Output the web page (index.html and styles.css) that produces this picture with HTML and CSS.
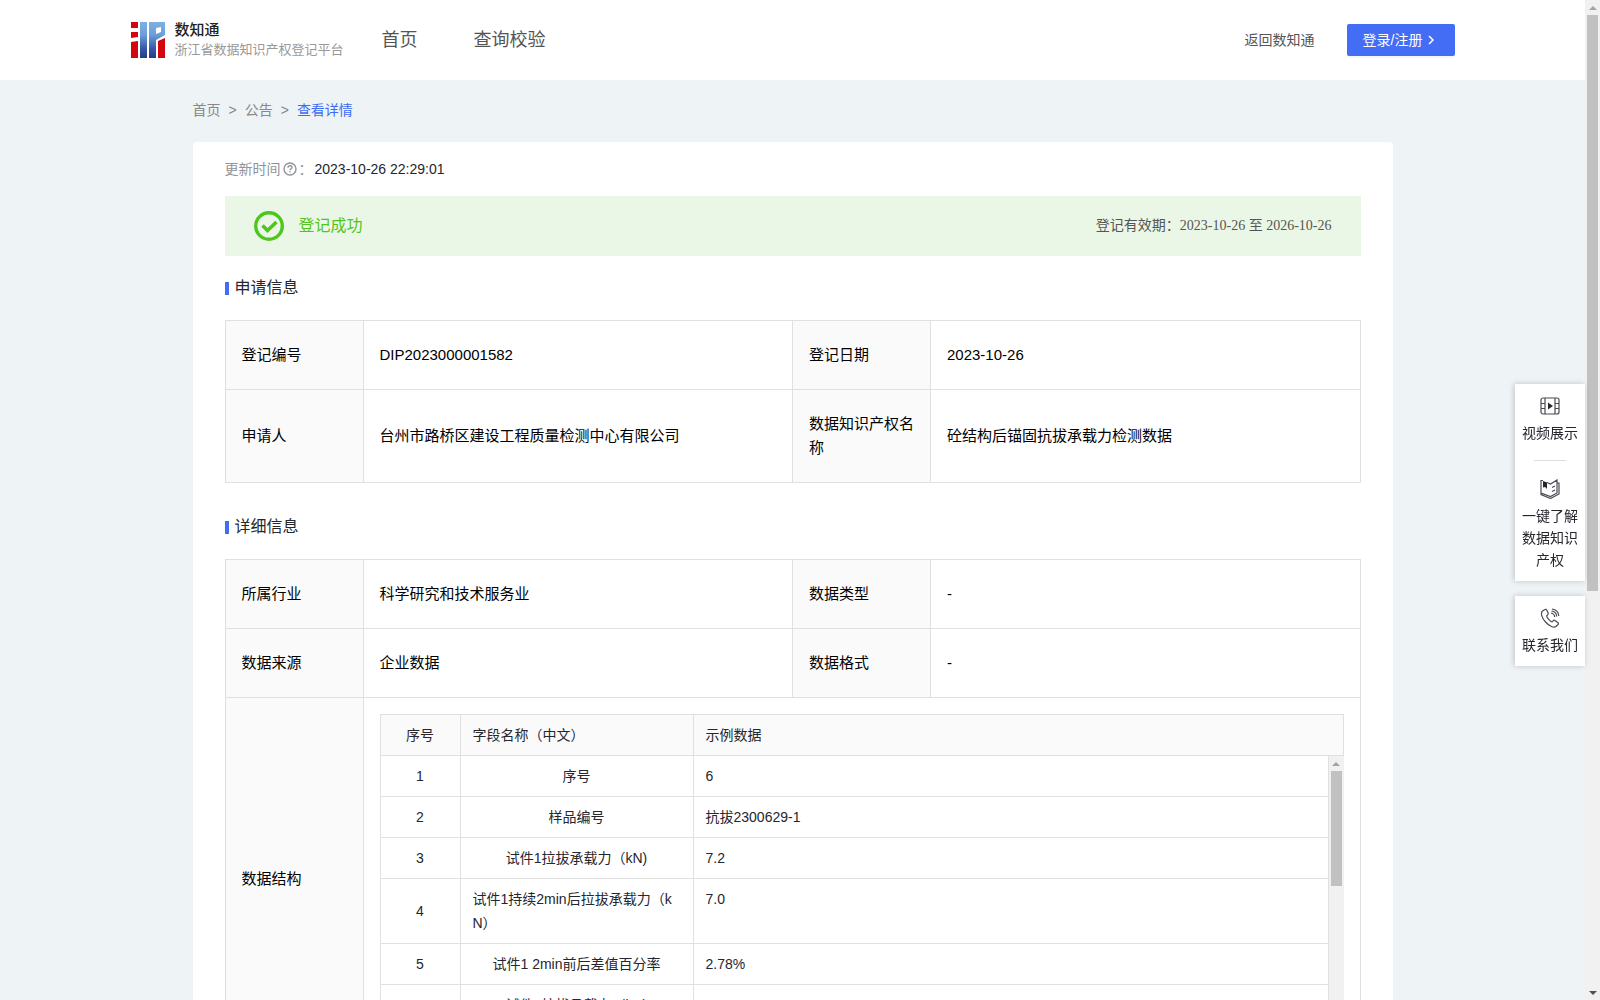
FILE: index.html
```html
<!DOCTYPE html>
<html lang="zh-CN">
<head>
    <meta charset="UTF-8">
    <meta name="viewport" content="width=device-width, initial-scale=1.0">
    <title>数知通</title>
    <link rel="stylesheet" href="styles.css">
</head>
<body>
<div class="page">
    <!-- Header -->
    <header class="header">
        <div class="header-inner">
            <a class="brand" href="/">
                <svg class="logo" width="34" height="36" viewBox="0 0 34 36">
                    <defs>
                        <linearGradient id="blue" gradientUnits="userSpaceOnUse" x1="0" y1="0" x2="0" y2="36">
                            <stop offset="0" stop-color="#7fb0e4"/>
                            <stop offset="0.35" stop-color="#6c9fdb"/>
                            <stop offset="0.75" stop-color="#3557a5"/>
                            <stop offset="1" stop-color="#263c86"/>
                        </linearGradient>
                    </defs>
                    <path fill="#d2060c" d="M0 0h7v6H0zM0 10h7v5l-7 1zM0 20l7-1v17H0z"/>
                    <path fill="url(#blue)" d="M9 0h7v36H9z"/>
                    <path fill="url(#blue)" fill-rule="evenodd" d="M18 0h16v13l-9 5v18h-7zM25 6v6l5-2V5z"/>
                    <path fill="#d2060c" d="M27 19l7-3v20h-7z"/>
                </svg>
                <span class="brand-text">
                    <strong>数知通</strong>
                    <small>浙江省数据知识产权登记平台</small>
                </span>
            </a>
            <nav class="nav">
                <a href="/">首页</a>
                <a href="/check">查询校验</a>
            </nav>
            <div class="header-right">
                <a href="/back">返回数知通</a>
                <button class="login-btn" type="button">登录/注册
                    <svg width="8" height="10" viewBox="0 0 8 10"><path d="M2 1l4 4-4 4" fill="none" stroke="#fff" stroke-width="1.5"/></svg>
                </button>
            </div>
        </div>
    </header>

    <main class="container">
        <div class="breadcrumb">
            <a href="/">首页</a><span>&gt;</span><a href="/notice">公告</a><span>&gt;</span><a class="active" href="#detail">查看详情</a>
        </div>

        <div class="card" id="detail">
            <div class="update">
                <span class="update-label">更新时间<svg width="18" height="16" viewBox="0 0 18 16" fill="none" stroke="#909399" stroke-width="1.4"><circle cx="9" cy="8" r="6"/><path d="M7 6.7c0-2.6 4-2.5 4-.3 0 1.400-2 1.300-2 2.900M9 10.300v1.300"/></svg>：</span>
                <span>2023-10-26 22:29:01</span>
            </div>

            <div class="banner">
                <svg width="30" height="30" viewBox="0 0 30 30" fill="none" stroke="#4fc61e"><circle cx="15" cy="15" r="13.300" stroke-width="3.400"/><path d="M8.500 14.500l5 5 9-8.500" stroke-width="3.600"/></svg>
                <span class="banner-status">登记成功</span>
                <span class="banner-date">登记有效期：2023-10-26 至 2026-10-26</span>
            </div>

            <h2>申请信息</h2>
            <table class="info">
                <tr>
                    <th>登记编号</th>
                    <td>DIP2023000001582</td>
                    <th>登记日期</th>
                    <td>2023-10-26</td>
                </tr>
                <tr>
                    <th>申请人</th>
                    <td>台州市路桥区建设工程质量检测中心有限公司</td>
                    <th>数据知识产权名称</th>
                    <td>砼结构后锚固抗拔承载力检测数据</td>
                </tr>
            </table>

            <h2>详细信息</h2>
            <table class="info">
                <tr>
                    <th>所属行业</th>
                    <td>科学研究和技术服务业</td>
                    <th>数据类型</th>
                    <td>-</td>
                </tr>
                <tr>
                    <th>数据来源</th>
                    <td>企业数据</td>
                    <th>数据格式</th>
                    <td>-</td>
                </tr>
                <tr>
                    <th>数据结构</th>
                    <td class="nested" colspan="3">
                        <table class="fields">
                            <tr>
                                <th class="col-no">序号</th>
                                <th class="col-name">字段名称（中文）</th>
                                <th>示例数据</th>
                            </tr>
                        </table>
                        <!-- Scrolling rows -->
                        <div class="fields-body">
                            <table class="fields">
                                <tr>
                                    <td class="col-no">1</td>
                                    <td class="col-name"><span>序号</span></td>
                                    <td>6</td>
                                </tr>
                                <tr>
                                    <td class="col-no">2</td>
                                    <td class="col-name"><span>样品编号</span></td>
                                    <td>抗拔2300629-1</td>
                                </tr>
                                <tr>
                                    <td class="col-no">3</td>
                                    <td class="col-name"><span>试件1拉拔承载力（kN)</span></td>
                                    <td>7.2</td>
                                </tr>
                                <tr>
                                    <td class="col-no">4</td>
                                    <td class="col-name"><span>试件1持续2min后拉拔承载力（kN）</span></td>
                                    <td>7.0</td>
                                </tr>
                                <tr>
                                    <td class="col-no">5</td>
                                    <td class="col-name"><span>试件1 2min前后差值百分率</span></td>
                                    <td>2.78%</td>
                                </tr>
                                <tr>
                                    <td class="col-no">6</td>
                                    <td class="col-name"><span>试件2拉拔承载力（kN)</span></td>
                                    <td>6.9</td>
                                </tr>
                            </table>
                            <div class="scrollbar">
                                <i class="arrow-up"></i>
                                <div class="thumb thumb-short"></div>
                            </div>
                        </div>
                    </td>
                </tr>
            </table>
        </div>
    </main>
</div>

<div class="scrollbar">
    <i class="arrow-up"></i>
    <div class="thumb thumb-page"></div>
    <i class="arrow-down"></i>
</div>

<!-- Side tools -->
<aside class="side">
    <div class="side-box">
        <a href="#video">
            <svg width="20" height="20" viewBox="0 0 20 20" fill="none" stroke="#4a4b52" stroke-width="1.200"><rect x="1" y="2" width="18" height="16" rx="2"/><path d="M5 2v16M15 2v16M1 7.500h4M1 12.500h4M15 7.500h4M15 12.500h4"/><path d="M8 6.500l5 3.500-5 3.500z" fill="#25262e" stroke="none"/></svg>
            <span>视频展示</span>
        </a>
        <hr>
        <a href="#guide">
            <svg width="20" height="20" viewBox="0 0 20 20" fill="none" stroke="#4a4b52" stroke-width="1.200"><path d="M7 3.500l3.500 1.500L17 1v13l-6.500 3.500L1 14V1.500h2M1 14v1.500L10.500 19.500 19 15V4h-1.500M12 8.500l3-1.500M12 12.500l3-1.500"/><path d="M3 2l4 1.500V10L5.200 8 3 8.500z" fill="#25262e" stroke="none"/></svg>
            <span>一键了解数据知识产权</span>
        </a>
    </div>
    <div class="side-box">
        <a href="#contact">
            <svg width="20" height="20" viewBox="0 0 20 20" fill="none" stroke="#4a4b52" stroke-width="1.200"><path d="M5 1.500L2.500 3C.5 5 1.500 9.500 5.500 14s8.500 6 10.500 4.500l2-2c.7-.8.500-1.500-.3-2L15 12.500c-.8-.5-1.500-.3-2 .3l-1 1c-1.500 0-5.500-4.500-5.300-6l1.100-1.200c.5-.5.500-1.100.2-1.800L6.700 2C6.300 1.200 5.700 1.100 5 1.500zM11 5c2 .3 3.500 2 3.700 4M11.500 3c3 .3 5 2.500 5.200 5.500M12 1c4 .5 6.500 3 6.800 7"/></svg>
            <span>联系我们</span>
        </a>
    </div>
</aside>
</body>
</html>
```
FILE: styles.css
```css
* {
  box-sizing: border-box;
}

body {
  margin: 0;
  display: flex;
  height: 100vh;
  overflow: hidden;
  background-color: #eef3f6;
  color: #25262e;
  font-family: "Liberation Sans", "Noto Sans CJK SC", sans-serif;
  font-size: 14px;
  line-height: 22px;
}

a {
  color: inherit;
  text-decoration: none;
}

svg {
  flex: none;
}

.page {
  flex: 1;
  overflow: hidden;
}

/* Header */
.header {
  background-color: #fff;
}

.header-inner {
  display: flex;
  align-items: center;
  max-width: 1324px;
  height: 80px;
  margin: 0 auto;
  color: #555;
}

.brand {
  display: flex;
  align-items: center;
  gap: 10px;
}

.brand-text strong {
  display: block;
  color: #222;
  font-size: 15px;
  font-weight: 500;
  line-height: 20px;
}

.brand-text small {
  display: block;
  color: #999;
  font-size: 13px;
  line-height: 20px;
}

.nav {
  display: flex;
  gap: 56px;
  margin-left: 38px;
  font-size: 18px;
}

.header-right {
  display: flex;
  align-items: center;
  gap: 32px;
  margin-left: auto;
}

.login-btn {
  display: flex;
  align-items: center;
  gap: 4px;
  height: 32px;
  padding: 0 20px 0 16px;
  border: none;
  border-radius: 2px;
  background-color: #446df6;
  box-shadow: 0 2px 0 rgba(0, 0, 0, 0.04);
  color: #fff;
  font: inherit;
  cursor: pointer;
}

.login-btn:hover {
  background-color: #6b8cff;
}

.container {
  max-width: 1200px;
  margin: 0 auto;
}

.breadcrumb {
  display: flex;
  gap: 8px;
  padding: 19px 0 21px;
  color: #888;
}

.breadcrumb .active {
  color: #3d6bf5;
}

.card {
  padding: 16px 32px 32px;
  border-radius: 4px;
  background-color: #fff;
}

.update {
  display: flex;
  gap: 2px;
  margin-bottom: 16px;
}

.update-label {
  display: flex;
  align-items: center;
  color: #909399;
}

/* Registration status */
.banner {
  display: flex;
  align-items: center;
  height: 60px;
  padding: 0 29px;
  background-color: #ebf7e6;
}

.banner-status {
  margin-left: 15px;
  color: #52c41a;
  font-size: 16px;
}

.banner-date {
  margin-left: auto;
  color: #555;
  font-family: "Liberation Serif", "Noto Sans CJK SC", serif;
}

h2 {
  display: flex;
  align-items: center;
  gap: 6px;
  margin: 21px 0;
  font-size: 16px;
  font-weight: 400;
  line-height: 22px;
}

h2::before {
  content: "";
  width: 4px;
  height: 13px;
  background-color: #446df6;
}

.info + h2 {
  margin-top: 33px;
}

table {
  width: 100%;
  border-collapse: collapse;
  table-layout: fixed;
}

th, td {
  border: 1px solid #e0e0e0;
  font-weight: 400;
  line-height: 24px;
  text-align: left;
}

th {
  background-color: #fafafa;
}

.info {
  color: #000;
  font-size: 15px;
}

.info th, .info td {
  padding: 22px 16px;
}

.info th {
  width: 138px;
}

.info .nested {
  padding: 16px;
}

/* Field list */
.fields {
  color: #25262e;
  font-size: 14px;
}

.info .fields th, .info .fields td {
  width: auto;
  padding: 8px 12px;
  vertical-align: top;
  word-break: break-all;
}

.info .fields .col-no {
  width: 80px;
  text-align: center;
  vertical-align: middle;
}

.info .fields .col-name {
  width: 233px;
}

.info .fields td.col-name {
  text-align: center;
}

.col-name span {
  display: inline-block;
  text-align: left;
  vertical-align: top;
}

.fields-body {
  display: flex;
  height: 288px;
  overflow: hidden;
}

.fields-body .fields {
  flex: 1;
  align-self: flex-start;
}

.fields-body tr:first-child td {
  border-top: none;
}

/* Scrollbars */
.scrollbar {
  display: flex;
  flex-direction: column;
  align-items: center;
  flex: none;
  width: 15px;
  background-color: #f1f1f1;
}

.arrow-up, .arrow-down {
  flex: none;
  margin: 6px 0 5px;
  border: 4px solid transparent;
}

.arrow-up {
  border-top: none;
  border-bottom-color: #a3a3a3;
}

.arrow-down {
  margin-top: auto;
  border-bottom: none;
  border-top-color: #505050;
}

.thumb {
  width: 11px;
  background-color: #c1c1c1;
}

.thumb-short {
  height: 40%;
}

.thumb-page {
  height: calc(58% - 4px);
}

/* Side tools */
.side {
  position: fixed;
  top: 384px;
  right: 15px;
  width: 70px;
}

.side-box {
  margin-bottom: 15px;
  padding: 12px 7px 10px;
  background-color: #fff;
  box-shadow: -1px 0 6px rgba(0, 0, 0, 0.2);
}

.side-box a {
  display: flex;
  flex-direction: column;
  align-items: center;
  gap: 6px;
  text-align: center;
}

.side-box hr {
  width: 32px;
  height: 1px;
  margin: 16px auto 18px;
  border: none;
  background-color: #ddd;
}
```
